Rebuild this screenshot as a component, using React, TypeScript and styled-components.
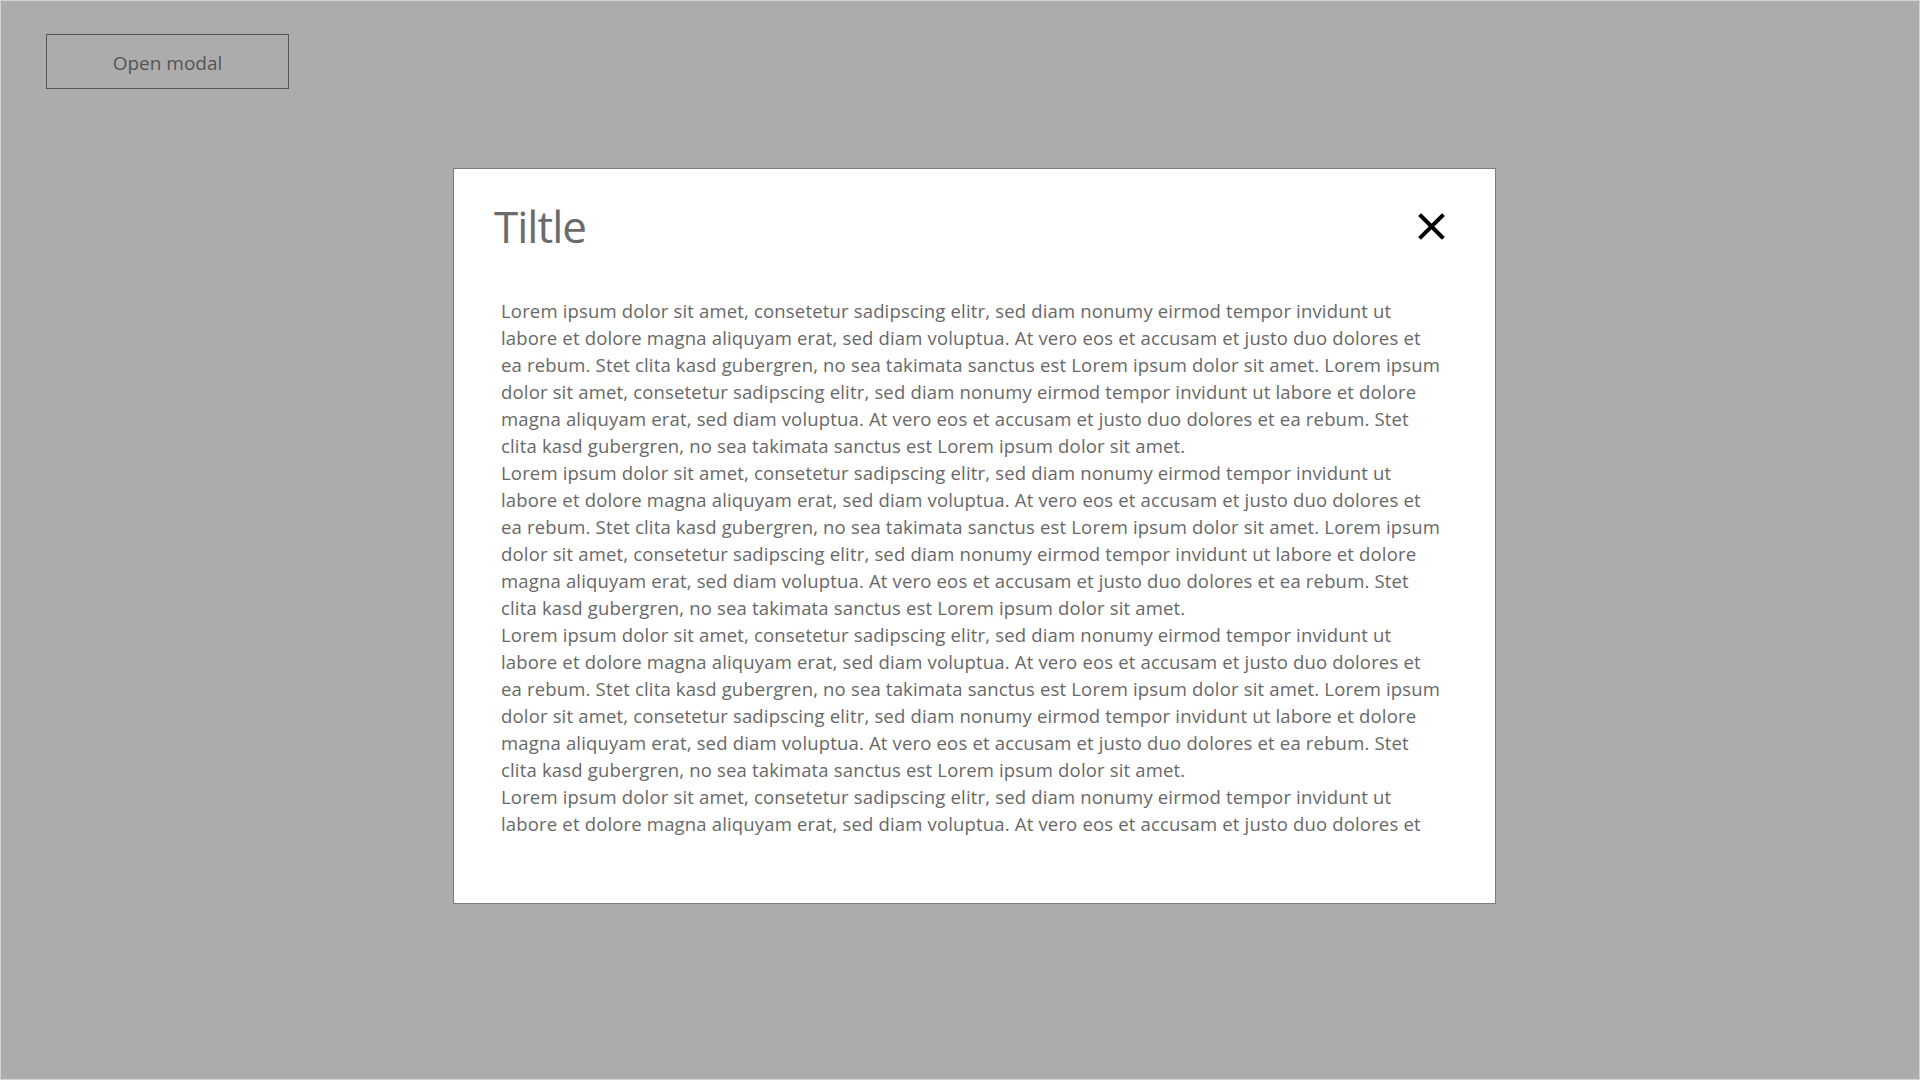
import React from "react";
import styled, { createGlobalStyle } from "styled-components";

const GlobalStyle = createGlobalStyle`
  html, body {
    margin: 0;
    padding: 0;
    height: 100%;
  }
  body {
    font-family: "Open Sans", "Noto Sans", sans-serif;
    background: #acacac;
  }
  #root {
    height: 100%;
  }
`;

const Page = styled.div`
  box-sizing: border-box;
  height: 100vh;
  border: 1px solid #d2d2d2;
  background: #acacac;
  padding: 33px 45px;
`;

const OpenButton = styled.button`
  box-sizing: border-box;
  width: 243px;
  height: 55px;
  padding: 2px 0 0;
  border: 1px solid #555555;
  background: transparent;
  color: #555555;
  font-family: "Open Sans", "Noto Sans", sans-serif;
  font-size: 19px;
  cursor: pointer;
`;

const Overlay = styled.div`
  position: fixed;
  inset: 0;
  display: flex;
  align-items: flex-start;
  justify-content: flex-start;
  padding: 168px 0 0 453px;
  pointer-events: none;
`;

const Modal = styled.div`
  box-sizing: border-box;
  width: 1043px;
  height: 736px;
  border: 1px solid #7a7a7a;
  background: #ffffff;
  display: flex;
  flex-direction: column;
  padding: 31px 50px 0 40px;
  pointer-events: auto;
`;

const Header = styled.div`
  display: flex;
  align-items: center;
  justify-content: space-between;
  height: 52px;
`;

const Title = styled.h2`
  margin: 0;
  font-family: "Open Sans", "Noto Sans", sans-serif;
  font-weight: 400;
  font-size: 44px;
  letter-spacing: -1px;
  line-height: 52px;
  color: #6b6b6b;
`;

const CloseButton = styled.button`
  width: 27px;
  height: 27px;
  padding: 0;
  border: none;
  background: none;
  display: flex;
  align-items: center;
  justify-content: center;
  cursor: pointer;
`;

const Body = styled.div`
  margin-top: 45px;
  padding-left: 7px;
  height: 540px;
  overflow: hidden;
  font-family: "Open Sans", "Noto Sans", sans-serif;
  font-size: 18.5px;
  letter-spacing: 0.17px;
  line-height: 27px;
  color: #686868;
`;

const Paragraph = styled.p`
  margin: 0;
`;

const Line = styled.span`
  display: block;
  white-space: nowrap;
`;

const LINES = [
  "Lorem ipsum dolor sit amet, consetetur sadipscing elitr, sed diam nonumy eirmod tempor invidunt ut",
  "labore et dolore magna aliquyam erat, sed diam voluptua. At vero eos et accusam et justo duo dolores et",
  "ea rebum. Stet clita kasd gubergren, no sea takimata sanctus est Lorem ipsum dolor sit amet. Lorem ipsum",
  "dolor sit amet, consetetur sadipscing elitr, sed diam nonumy eirmod tempor invidunt ut labore et dolore",
  "magna aliquyam erat, sed diam voluptua. At vero eos et accusam et justo duo dolores et ea rebum. Stet",
  "clita kasd gubergren, no sea takimata sanctus est Lorem ipsum dolor sit amet.",
];

export default function App() {
  return (
    <>
      <GlobalStyle />
      <Page>
        <OpenButton>Open modal</OpenButton>
        <Overlay>
          <Modal>
            <Header>
              <Title>Tiltle</Title>
              <CloseButton aria-label="Close">
                <svg width="27" height="27" viewBox="0 0 27 27">
                  <path
                    d="M3 3 L24 24 M24 3 L3 24"
                    stroke="#000"
                    strokeWidth="4"
                    strokeLinecap="square"
                    fill="none"
                  />
                </svg>
              </CloseButton>
            </Header>
            <Body>
              {[0, 1, 2, 3].map((p) => (
                <Paragraph key={p}>
                  {LINES.map((l, i) => (
                    <Line key={i}>{l}</Line>
                  ))}
                </Paragraph>
              ))}
            </Body>
          </Modal>
        </Overlay>
      </Page>
    </>
  );
}
